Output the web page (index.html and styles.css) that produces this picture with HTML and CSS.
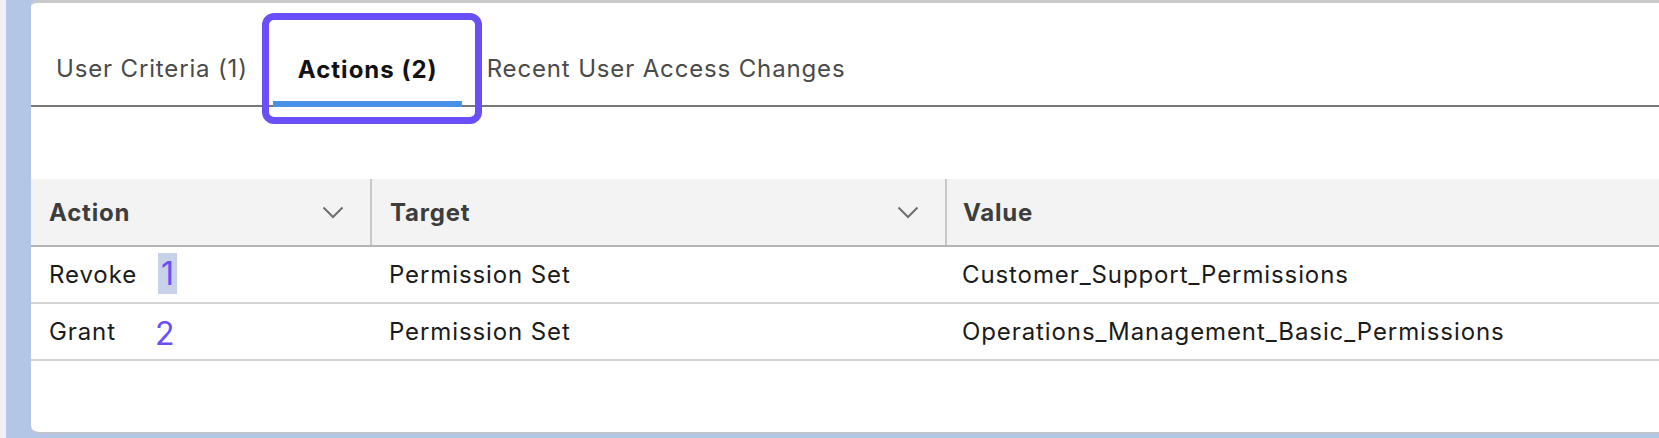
FILE: index.html
```html
<!DOCTYPE html>
<html lang="en">
<head>
    <meta charset="UTF-8">
    <meta name="viewport" content="width=device-width, initial-scale=1.0">
    <title>Access Policy - Actions</title>
    <link rel="stylesheet" href="styles.css">
</head>
<body>
    <div class="page">
        <div class="card">
            <div class="tabs">
                <div class="tab">User Criteria (1)</div>
                <div class="tab active">Actions (2)</div>
                <div class="tab">Recent User Access Changes</div>
            </div>
            <div class="focus-box"></div>

            <table class="actions-table">
                <colgroup>
                    <col class="col-action">
                    <col class="col-target">
                    <col>
                </colgroup>
                <thead>
                    <tr>
                        <th>
                            <div class="th-inner">
                                <span>Action</span>
                                <svg class="chevron" width="22" height="13" viewBox="0 0 22 13"><polyline points="1.5,1.5 11,11 20.5,1.5" fill="none" stroke="#6e6e6e" stroke-width="2"/></svg>
                            </div>
                        </th>
                        <th>
                            <div class="th-inner">
                                <span>Target</span>
                                <svg class="chevron" width="22" height="13" viewBox="0 0 22 13"><polyline points="1.5,1.5 11,11 20.5,1.5" fill="none" stroke="#6e6e6e" stroke-width="2"/></svg>
                            </div>
                        </th>
                        <th class="last">Value</th>
                    </tr>
                </thead>
                <tbody>
                    <tr>
                        <td class="action-cell">Revoke <span class="step step-selected">1</span></td>
                        <td>Permission Set</td>
                        <td class="last">Customer_Support_Permissions</td>
                    </tr>
                    <tr>
                        <td class="action-cell">Grant <span class="step step-two">2</span></td>
                        <td>Permission Set</td>
                        <td class="last">Operations_Management_Basic_Permissions</td>
                    </tr>
                </tbody>
            </table>
        </div>
    </div>
</body>
</html>
```

FILE: styles.css
```css
html, body {
    margin: 0;
    padding: 0;
}
body {
    font-family: Inter, "Noto Sans", Arial, sans-serif;
    background: #a9b9d6;
    width: 1659px;
    height: 438px;
    overflow: hidden;
}
.page {
    height: 438px;
    background: #b3c6e6;
    border-left: 6px solid #eef1f6;
    padding-left: 25px;
    box-sizing: border-box;
}
.card {
    position: relative;
    background: #fff;
    height: 434px;
    box-sizing: border-box;
    border-top: 3px solid #c9c9c9;
    border-bottom: 2px solid #c2c5cb;
    border-radius: 6px 0 0 8px;
}

/* tabs */
.tabs {
    display: flex;
    border-bottom: 2px solid #777;
    height: 104px;
    box-sizing: border-box;
}
.tab {
    padding: 29px 25px 0;
    height: 102px;
    box-sizing: border-box;
    display: flex;
    align-items: center;
    font-size: 24px;
    letter-spacing: 0.85px;
    color: #4a4a4a;
}
.tab.active {
    font-weight: 700;
    letter-spacing: 1px;
    color: #121212;
    border-bottom: 6px solid #4a90e6;
    margin-bottom: -2px;
    height: 104px;
    padding: 35px 24px 0 25px;
}
.focus-box {
    position: absolute;
    left: 231px;
    top: 10px;
    width: 220px;
    height: 111px;
    box-sizing: border-box;
    border: 7px solid #6a4ff6;
    border-radius: 12px;
}

/* table */
.actions-table {
    width: 100%;
    margin-top: 72px;
    border-collapse: collapse;
    table-layout: fixed;
    font-size: 24px;
    letter-spacing: 0.9px;
}
.col-action {
    width: 340px;
}
.col-target {
    width: 575px;
}
.actions-table th {
    background: #f3f3f3;
    height: 66px;
    padding: 0 26px 0 18px;
    text-align: left;
    font-weight: 700;
    letter-spacing: 0.8px;
    color: #3d3d3d;
    border-bottom: 2px solid #b4b4b4;
    border-right: 2px solid #c8c8c8;
}
.actions-table th.last {
    border-right: none;
    padding-left: 16px;
}
.th-inner {
    display: flex;
    align-items: center;
    justify-content: space-between;
}
.actions-table td {
    height: 55px;
    padding: 0 18px;
    color: #1b1b1b;
    border-bottom: 2px solid #d2d2d2;
    white-space: nowrap;
}
.actions-table td.last {
    padding-left: 16px;
}
.action-cell {
    position: relative;
}

/* numbered markers */
.step {
    position: absolute;
    font-size: 32px;
    letter-spacing: 0;
    color: #6a4ff6;
    line-height: 1;
}
.step-selected {
    left: 127px;
    top: 6px;
    width: 19px;
    height: 41px;
    background: #c7d1e8;
    display: flex;
    align-items: center;
    justify-content: center;
}
.step-two {
    left: 124px;
    top: 14px;
}
```
